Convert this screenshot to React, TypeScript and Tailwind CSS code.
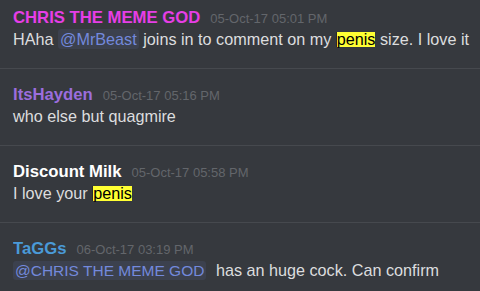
const font = { fontFamily: '"Liberation Sans", Arial, sans-serif' };

function Mention({ children, className = "" }: { children: React.ReactNode; className?: string }) {
  return (
    <span className={`rounded-[3px] bg-[#3c414e] px-[2px] py-[1px] text-[#7389dc] ${className}`}>{children}</span>
  );
}

function Mark({ children }: { children: React.ReactNode }) {
  return (
    <span className="inline-block h-[15px] border-l border-[#2a2a2a] bg-[#ffff33] leading-[15px] text-black">
      {children}
    </span>
  );
}

type Msg = { name: string; color: string; time: string; body: React.ReactNode };

const messages: Msg[] = [
  {
    name: "CHRIS THE MEME GOD",
    color: "text-[#e63ee6]",
    time: "05-Oct-17 05:01 PM",
    body: (
      <>
        HAha <Mention>@MrBeast</Mention> joins in to comment on my <Mark>penis</Mark> size. I love it
      </>
    ),
  },
  {
    name: "ItsHayden",
    color: "text-[#9b6ddd]",
    time: "05-Oct-17 05:16 PM",
    body: <>who else but quagmire</>,
  },
  {
    name: "Discount Milk",
    color: "text-white",
    time: "05-Oct-17 05:58 PM",
    body: (
      <>
        I love your <Mark>penis</Mark>
      </>
    ),
  },
  {
    name: "TaGGs",
    color: "text-[#4a9ad8]",
    time: "06-Oct-17 03:19 PM",
    body: (
      <>
        <Mention className="mr-[5px] text-[15.5px]">@CHRIS THE MEME GOD</Mention> has an huge cock. Can confirm
      </>
    ),
  },
];

export default function App() {
  return (
    <div className="h-[291px] w-[480px] overflow-hidden bg-[#36393e]" style={font}>
      <div className="-mt-2">
        {messages.map((m, i) => (
          <div key={i} className="h-[77px] border-b border-[#46494e] px-[13px] pt-4">
            <div className="flex h-5 items-baseline gap-[10px] overflow-hidden leading-5">
              <span className={`text-[16.7px] font-bold ${m.color}`}>{m.name}</span>
              <span className="text-[13px] text-[#63666b]">{m.time}</span>
            </div>
            <div className="mt-[1px] h-5 whitespace-nowrap text-[16.2px] leading-5 text-[#dcddde]">{m.body}</div>
          </div>
        ))}
      </div>
    </div>
  );
}
